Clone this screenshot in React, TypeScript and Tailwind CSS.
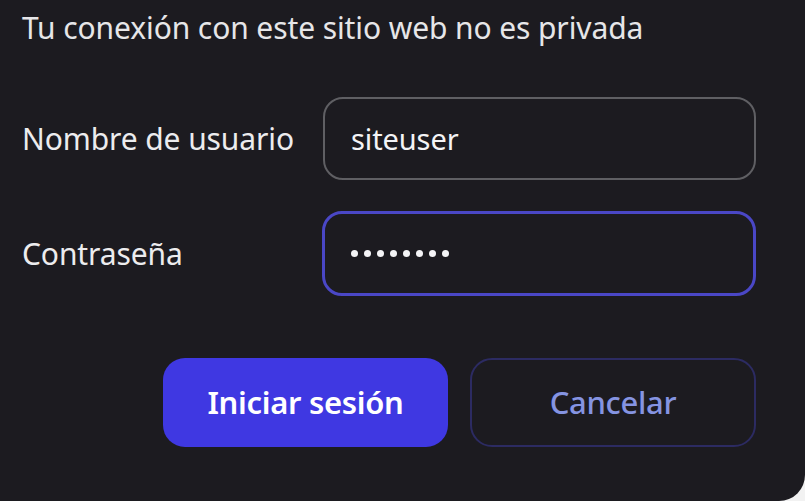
import React from "react";

export default function App() {
  const font = { fontFamily: '"Noto Sans", "Open Sans", sans-serif' };
  return (
    <div className="w-[805px] h-[501px] bg-[#f2f2f2] overflow-hidden" style={font}>
      <div className="w-[805px] h-[501px] bg-[#1c1b20] rounded-br-[26px] pl-[22px] pr-[49px] pt-[9px] flex flex-col">
        <div className="text-[30px] leading-[38px] text-[#e6e6e8] tracking-[-0.1px]">
          Tu conexión con este sitio web no es privada
        </div>
        <div className="mt-[50px] flex items-center h-[83px]">
          <div className="w-[301px] text-[30px] text-[#ececee] tracking-[-0.1px]">Nombre de usuario</div>
          <div className="flex-1 h-[83px] rounded-[20px] border-2 border-[#5f5f63] flex items-center pl-[26px] text-[29px] text-[#f4f4f6] tracking-[-0.1px]">
            siteuser
          </div>
        </div>
        <div className="mt-[31px] flex items-center h-[85px]">
          <div className="w-[300px] text-[30px] text-[#ececee] tracking-[-0.1px]">Contraseña</div>
          <div className="flex-1 h-[85px] rounded-[20px] border-[3px] border-[#4a47c6] flex items-center pl-[26px] gap-[6px]">
            {Array.from({ length: 8 }).map((_, i) => (
              <span key={i} className="w-[7px] h-[7px] rounded-full bg-[#f4f4f6]" />
            ))}
          </div>
        </div>
        <div className="mt-[62px] flex justify-end gap-[22px]">
          <button className="w-[285px] h-[89px] rounded-[22px] bg-[#3f38e2] text-white text-[31px] font-semibold tracking-[-0.3px]">
            Iniciar sesión
          </button>
          <button className="w-[286px] h-[89px] rounded-[22px] border-2 border-[#2c2b62] text-[#8594e2] text-[31px] font-medium tracking-[-0.3px]">
            Cancelar
          </button>
        </div>
      </div>
    </div>
  );
}
